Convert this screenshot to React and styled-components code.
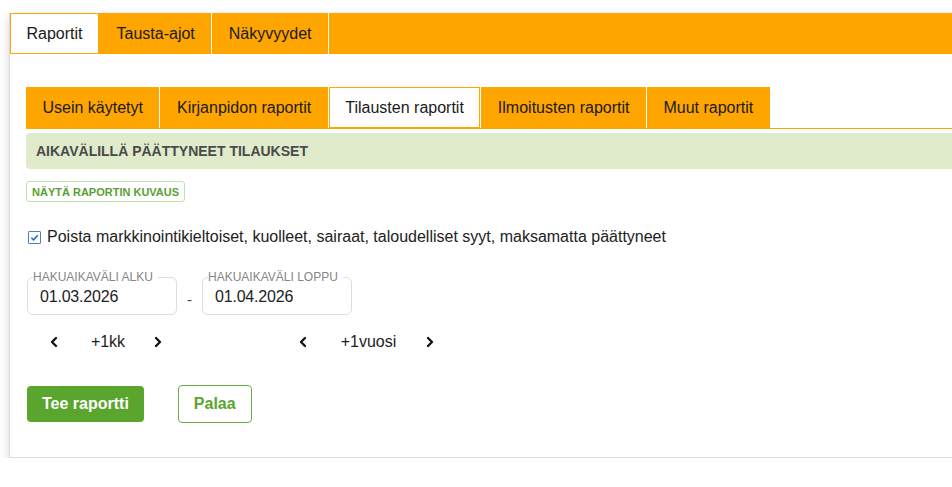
import styled, { createGlobalStyle } from "styled-components";
import { ChevronLeft, ChevronRight } from "lucide-react";

const GlobalStyle = createGlobalStyle`
  html, body {
    margin: 0;
    padding: 0;
    background: #ffffff;
    overflow: hidden;
    font-family: "Liberation Sans", Arial, sans-serif;
    color: #222;
  }
`;

const Page = styled.div`
  padding: 13px 0 0 9px;
  width: 1100px;
`;

const Panel = styled.div`
  background: #fff;
  border: 1px solid #dcdcdc;
  border-top: none;
  box-shadow: 0 4px 10px rgba(0, 0, 0, 0.16);
`;

const MainTabs = styled.div`
  display: flex;
  height: 41px;
  background: #ffa500;
`;

const MainTab = styled.div`
  display: flex;
  align-items: center;
  padding: 0 16.5px;
  font-size: 16px;
  color: #1a1a1a;
  border-right: 1px solid ${(p) => (p.$active ? "#ffa500" : "#ffffff")};
  background: ${(p) => (p.$active ? "#ffffff" : "transparent")};
  box-shadow: ${(p) => (p.$active ? "inset 0 0 0 1px #ffa500" : "none")};
`;

const Content = styled.div`
  padding: 33px 0 34px 16px;
`;

const SubTabs = styled.div`
  display: flex;
  height: 41px;
  border-bottom: 1px solid #ffa500;
`;

const SubTab = styled.div`
  display: flex;
  align-items: center;
  padding: 0 16.5px;
  font-size: 16px;
  color: #1a1a1a;
  background: ${(p) => (p.$active ? "#ffffff" : "#ffa500")};
  border-right: 1px solid #ffffff;
  box-shadow: ${(p) => (p.$active ? "inset 0 0 0 1px #ffa500" : "none")};
`;

const ReportHeader = styled.div`
  margin-top: 4px;
  height: 36px;
  display: flex;
  align-items: center;
  padding-left: 10px;
  background: #e0ebcb;
  border-radius: 4px 0 0 4px;
  font-size: 14px;
  font-weight: bold;
  color: #4a4a4a;
`;

const DescButton = styled.button`
  margin-top: 12px;
  height: 21px;
  padding: 0 5px;
  background: #fff;
  border: 1px solid #bfe3ad;
  border-radius: 3px;
  font-family: "Liberation Sans", Arial, sans-serif;
  font-size: 11px;
  font-weight: bold;
  color: #5a9e33;
`;

const CheckRow = styled.label`
  display: flex;
  align-items: center;
  gap: 6px;
  margin-top: 26px;
  padding-left: 2px;
  font-size: 16px;
  color: #222;
`;

const CheckBox = styled.span`
  width: 11px;
  height: 11px;
  border: 1px solid #4c7fd4;
  border-radius: 1px;
  display: flex;
  align-items: center;
  justify-content: center;
`;

const DateRow = styled.div`
  display: flex;
  align-items: flex-end;
  margin-top: 25px;
  padding-left: 1px;
`;

const DateField = styled.fieldset`
  margin: 0;
  width: 150px;
  height: 44px;
  box-sizing: border-box;
  padding: 0 0 0 12px;
  border: 1px solid #dddddd;
  border-radius: 6px;
  display: flex;
  align-items: center;
`;

const Legend = styled.legend`
  padding: 0 5px 0 0;
  margin-left: -7px;
  font-size: 12px;
  color: #858585;
  line-height: 13px;
`;

const DateValue = styled.div`
  font-size: 16px;
  color: #222;
  margin-top: -4px;
  letter-spacing: -0.2px;
`;

const Dash = styled.div`
  width: 25px;
  text-align: center;
  font-size: 15px;
  color: #444;
  padding-bottom: 7px;
`;

const NavRow = styled.div`
  display: flex;
  align-items: center;
  margin-top: 13px;
  height: 28px;
`;

const NavGroup = styled.div`
  display: grid;
  grid-template-columns: 16px 1fr 16px;
  align-items: center;
  width: ${(p) => p.$width}px;
  margin-left: ${(p) => p.$offset}px;
`;

const NavArrow = styled.span`
  display: flex;
  justify-content: center;
  color: #111;
`;

const NavLabel = styled.span`
  text-align: center;
  font-size: 16px;
  color: #222;
  padding-left: ${(p) => p.$shift || 0}px;
`;

const Actions = styled.div`
  display: flex;
  align-items: center;
  gap: 34px;
  margin-top: 29px;
  padding-left: 1px;
`;

const PrimaryButton = styled.button`
  height: 36px;
  padding: 0 15px;
  background: #5aa52d;
  border: none;
  border-radius: 4px;
  color: #fff;
  font-family: "Liberation Sans", Arial, sans-serif;
  font-size: 16px;
  font-weight: bold;
`;

const SecondaryButton = styled.button`
  height: 38px;
  padding: 0 15px;
  background: #fff;
  border: 1px solid #6aaf45;
  border-radius: 4px;
  color: #5aa52d;
  font-family: "Liberation Sans", Arial, sans-serif;
  font-size: 16px;
  font-weight: bold;
`;

const mainTabs = ["Raportit", "Tausta-ajot", "Näkyvyydet"];
const subTabs = [
  "Usein käytetyt",
  "Kirjanpidon raportit",
  "Tilausten raportit",
  "Ilmoitusten raportit",
  "Muut raportit",
];

export default function App() {
  return (
    <>
      <GlobalStyle />
      <Page>
        <Panel>
          <MainTabs>
            {mainTabs.map((t, i) => (
              <MainTab key={t} $active={i === 0}>
                {t}
              </MainTab>
            ))}
          </MainTabs>
          <Content>
            <SubTabs>
              {subTabs.map((t, i) => (
                <SubTab key={t} $active={i === 2}>
                  {t}
                </SubTab>
              ))}
            </SubTabs>
            <ReportHeader>AIKAVÄLILLÄ PÄÄTTYNEET TILAUKSET</ReportHeader>
            <DescButton>NÄYTÄ RAPORTIN KUVAUS</DescButton>
            <CheckRow>
              <CheckBox>
                <svg width="9" height="9" viewBox="0 0 10 10">
                  <path d="M1.5 5.2 L4 7.6 L8.6 2.4" fill="none" stroke="#2b63c9" strokeWidth="1.7" />
                </svg>
              </CheckBox>
              Poista markkinointikieltoiset, kuolleet, sairaat, taloudelliset syyt, maksamatta päättyneet
            </CheckRow>
            <DateRow>
              <DateField>
                <Legend>HAKUAIKAVÄLI ALKU</Legend>
                <DateValue>01.03.2026</DateValue>
              </DateField>
              <Dash>-</Dash>
              <DateField>
                <Legend>HAKUAIKAVÄLI LOPPU</Legend>
                <DateValue>01.04.2026</DateValue>
              </DateField>
            </DateRow>
            <NavRow>
              <NavGroup $width={120} $offset={20}>
                <NavArrow><ChevronLeft size={16} strokeWidth={3.5} /></NavArrow>
                <NavLabel $shift={4}>+1kk</NavLabel>
                <NavArrow><ChevronRight size={16} strokeWidth={3.5} /></NavArrow>
              </NavGroup>
              <NavGroup $width={143} $offset={129}>
                <NavArrow><ChevronLeft size={16} strokeWidth={3.5} /></NavArrow>
                <NavLabel $shift={4}>+1vuosi</NavLabel>
                <NavArrow><ChevronRight size={16} strokeWidth={3.5} /></NavArrow>
              </NavGroup>
            </NavRow>
            <Actions>
              <PrimaryButton>Tee raportti</PrimaryButton>
              <SecondaryButton>Palaa</SecondaryButton>
            </Actions>
          </Content>
        </Panel>
      </Page>
    </>
  );
}
